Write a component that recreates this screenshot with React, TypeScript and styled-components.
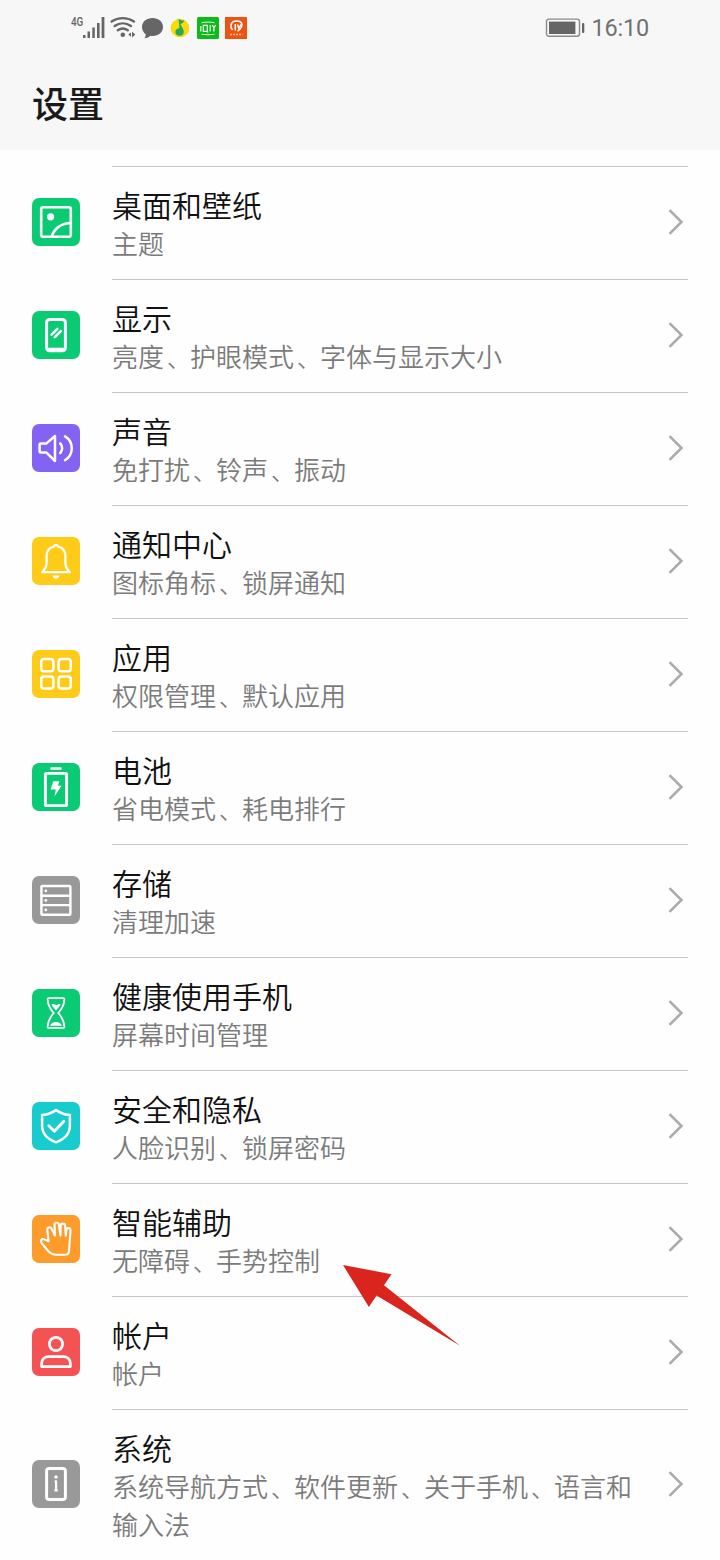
import React from "react";
import styled, { createGlobalStyle } from "styled-components";

const GlobalStyle = createGlobalStyle`
  * { box-sizing: border-box; }
  body {
    margin: 0;
    background: #fff;
    font-family: "Noto Sans CJK SC", "Noto Sans", sans-serif;
  }
`;

const Screen = styled.main`
  position: relative;
  width: 720px;
  height: 1560px;
  overflow: hidden;
  background: #fefefe;
`;

const Header = styled.header`
  height: 150px;
  background: #f7f7f7;
`;

const StatusBar = styled.div`
  display: flex;
  justify-content: space-between;
  align-items: center;
  height: 56px;
  padding: 0 71px;
  color: #666;
`;

const StatusGroup = styled.div<{ $gap?: number }>`
  display: flex;
  align-items: center;
  gap: ${(p) => p.$gap ?? 0}px;
`;

const Network = styled.span`
  width: 12px;
  height: 24px;
  font: 500 13px/12px Roboto, sans-serif;
  transform: scaleX(0.76);
  transform-origin: left;
`;

const Clock = styled.time`
  font: 400 23.5px/28px Roboto, sans-serif;
  letter-spacing: -0.2px;
  color: #707070;
`;

const PageTitle = styled.h1`
  margin: 20px 0 0 32px;
  font-size: 36px;
  line-height: 52px;
  font-weight: 500;
  color: #1a1a1a;
`;

const List = styled.ul`
  margin: 16px 0 0;
  padding: 0;
  list-style: none;
`;

const Row = styled.li`
  display: grid;
  grid-template-columns: 48px 1fr;
  column-gap: 32px;
  align-items: center;
  padding: 0 32px;
`;

const Tile = styled.div<{ $color: string }>`
  width: 48px;
  height: 48px;
  margin-bottom: 1px;
  border-radius: 7px;
  background: ${(p) => p.$color};
  svg { display: block; }
`;

const Body = styled.div`
  display: flex;
  align-items: center;
  justify-content: space-between;
  padding: 17px 3px 17px 0;
  border-top: 1px solid #c6c6c6;
`;

const Texts = styled.div`
  width: 524px;
`;

const Name = styled.div`
  font-size: 30px;
  line-height: 40px;
  font-weight: 350;
  color: #111;
`;

const Detail = styled.div`
  font-size: 26px;
  line-height: 38px;
  font-weight: 350;
  color: #7b7b7b;
`;

const Comma = styled.span`
  margin-left: 3px;
  font-size: 23px;
  line-height: 1;
`;

const ChevronIcon = styled.svg`
  margin-bottom: 2px;
`;

const Pointer = styled.svg`
  position: absolute;
  left: 340px;
  top: 1260px;
`;

const Glyph = ({ children, w = 2.6 }: { children: React.ReactNode; w?: number }) => (
  <svg width="48" height="48" viewBox="0 0 48 48" fill="none" stroke="#fff" strokeWidth={w} strokeLinecap="round" strokeLinejoin="round">
    {children}
  </svg>
);

const Wallpaper = () => (
  <Glyph>
    <rect x="9.2" y="9.2" width="29.6" height="29.6" rx="2" />
    <circle cx="18.6" cy="18.8" r="3.6" fill="#fff" stroke="none" />
    <path d="M20 38C22 31 28.5 25.6 38 25" />
  </Glyph>
);

const Display = () => (
  <Glyph w={3}>
    <rect x="14.6" y="8.4" width="18.8" height="31.4" rx="3" />
    <path d="M15.5 38.3h17" />
    <path d="M19.6 23.6L25.4 17.8M22.8 26.2L28.8 20.2" strokeWidth="2.6" />
  </Glyph>
);

const Sound = () => (
  <Glyph w={2.5}>
    <path d="M23 12L14.2 19.6H8.6a1 1 0 0 0-1 1v6.8a1 1 0 0 0 1 1h5.6L23 37z" />
    <path d="M28.2 19.4a7.2 7.2 0 0 1 0 9.8M33 12.4c9 5.4 9 18.2 0 23.8" />
  </Glyph>
);

const Bell = () => (
  <Glyph w={2.3}>
    <path d="M24 8c1.1 0 1.9.7 2.2 1.700 4.500 1 7.200 4.400 7.200 9.200v7.200c0 3.800 1.300 6 4.400 9.100H10.200c3.100-3.100 4.400-5.300 4.400-9.100v-7.200c0-4.800 2.700-8.200 7.200-9.200.3-1 1.100-1.700 2.200-1.700z" />
    <path d="M20.400 38.500h7.200c-.5 1.900-1.800 3.100-3.600 3.100s-3.100-1.200-3.600-3.100z" fill="#fff" stroke="none" />
  </Glyph>
);

const Apps = () => (
  <Glyph w={2.5}>
    <rect x="9.2" y="9" width="12.2" height="12.2" rx="2.8" />
    <rect x="26.6" y="9" width="12.2" height="12.2" rx="2.8" />
    <rect x="9.2" y="26.4" width="12.2" height="12.2" rx="2.8" />
    <rect x="26.6" y="26.4" width="12.2" height="12.2" rx="2.8" />
  </Glyph>
);

const Battery = () => (
  <Glyph w={2.9}>
    <path d="M19.5 5.5h9" strokeWidth="2.6" />
    <rect x="13.4" y="10.4" width="21.2" height="32.2" rx="1.2" />
    <path d="M21.2 18.2h6.2l-1.5 4.6h3.7L22.4 33.4l1.4-7h-5.2z" fill="#fff" stroke="none" />
  </Glyph>
);

const Storage = () => (
  <Glyph w={2.4}>
    <rect x="9.4" y="10" width="29" height="28.8" rx="1" />
    <path d="M10 19.7h28M10 29.1h28" />
    {[14.9, 24.4, 33.9].map((y) => (
      <circle key={y} cx="13.8" cy={y} r="1.4" fill="#fff" stroke="none" />
    ))}
  </Glyph>
);

const Hourglass = () => (
  <Glyph w={1.8}>
    <path d="M17 9.100h14c1 0 1.500.5 1.400 1.500-.5 6.400-2.600 9.600-6.200 13.400 3.600 3.800 5.700 7 6.200 13.400.1 1-.4 1.500-1.400 1.500H17c-1 0-1.500-.5-1.400-1.500.5-6.400 2.600-9.600 6.200-13.400-3.600-3.800-5.700-7-6.200-13.400-.1-1 .4-1.500 1.400-1.500z" />
    <path d="M19.600 15.600c2.200-1.400 3.500.6 5 .3 1.500-.2 2-1.300 3.900-.7-.8 2.200-2.500 3.900-4.500 6.200-2-2.100-3.700-3.900-4.400-5.800zM18 36.800c.8-2.400 3.200-3.900 6-3.900s5.200 1.500 6 3.900z" fill="#fff" stroke="none" />
  </Glyph>
);

const Shield = () => (
  <Glyph w={2.5}>
    <path d="M24 8.100c4.300 3 9 4.500 13.900 5v10.400c0 8.500-5.500 13.700-13.900 16.800-8.400-3.100-13.900-8.300-13.900-16.800V13.100c4.900-.5 9.600-2 13.900-5z" />
    <path d="M16.800 23.800l5.600 5.400 9.400-10" strokeWidth="2.900" />
  </Glyph>
);

const Hand = () => (
  <Glyph w={2.1}>
    <path d="M16.600 26.200L12.400 24.400c-2.700-1.100-4.700 1.400-2.900 3.600L16.200 36c2.400 2.700 4.700 3.700 8 3.700h8.800c2.400 0 3.800-1.200 4-3.600L38.500 15.600c.2-3-3.700-3.400-4.100-.6L33.800 20.600 33.200 10.900c-.1-3.100-4.500-3.100-4.500 0L28.500 20.500 26.900 9.700c-.4-2.900-4.700-2.500-4.400.6L23 20.600 19.600 13.700c-1.200-2.500-4.900-1.400-4.300 1.400z" />
  </Glyph>
);

const Person = () => (
  <Glyph w={2.8}>
    <circle cx="24" cy="16" r="6.6" />
    <path d="M9.600 38.600v-2.800c0-4.400 3-7.200 7.200-7.200h14.400c4.200 0 7.200 2.800 7.200 7.200v2.800z" />
  </Glyph>
);

const Info = () => (
  <Glyph w={3}>
    <rect x="14.6" y="8.6" width="18.8" height="31" rx="2.6" />
    <circle cx="24" cy="17" r="1.800" fill="#fff" stroke="none" />
    <path d="M22.600 21.400h1.500v8.600M22.400 30.300h3.400" strokeWidth="2.200" strokeLinecap="butt" />
  </Glyph>
);

const Chevron = () => (
  <ChevronIcon width="18" height="30" viewBox="0 0 18 30" fill="none" stroke="#aaa" strokeWidth="2.5">
    <path d="M2.500 3.200l12 11.800-12 11.800" />
  </ChevronIcon>
);

const StatusIcons = () => (
  <svg width="165" height="24" viewBox="83 16 165 24" fill="none">
    <g fill="#666">
      <rect x="83" y="35" width="2.5" height="3" />
      <rect x="87.5" y="31.5" width="2.5" height="6.5" />
      <rect x="92.3" y="27.5" width="2.5" height="10.5" />
      <rect x="97" y="23" width="2.6" height="15" />
      <rect x="101.600" y="17" width="2.8" height="21" />
      <circle cx="122.800" cy="34.800" r="2.3" />
      <path d="M131 32.400v4.400l-2.800-2.200zM132 31.800l3.400 2.800-3.400 2.800z" />
      <path d="M152.500 18c6 0 10.500 3.800 10.500 9s-4.500 9-10.300 9c-.9 0-1.600 0-2.300-.2-1.400 1.400-3.600 2.400-5.900 2.400 1-1.200 1.400-2.600 1.100-4-2.200-1.600-3.600-4.200-3.600-7.200 0-5.200 4.500-9 10.500-9z" />
    </g>
    <g stroke="#666" strokeWidth="2.3" strokeLinecap="round">
      <path d="M111.600 21.500c6.800-4.600 15.600-4.600 22.400 0M114.600 26c5-3.500 11.400-3.500 16.400 0M117.800 30.300c3-2.200 7-2.200 10 0" />
    </g>
    <circle cx="180" cy="28" r="9.3" fill="#fbd90c" />
    <path d="M178.500 18.500c1.800 1.700 3.500 2.200 5.800 2-.5 2-2.200 3.100-4 3.400l3 5.600c1.300 3.600-.3 6.300-3.500 6.300-2.900 0-4.600-1.600-4.400-4 .2-2 1.700-3.400 4.100-3.500z" fill="#22a95b" />
    <rect x="197" y="17" width="22" height="22" rx="1.5" fill="#0bbb17" />
    <path d="M201.500 22.600c4-.8 9-.8 13 0M201.500 34.200c4 .6 9 .6 13 0" stroke="#d8ffd6" strokeWidth="1.100" />
    <path d="M200.800 26v5.500M203.300 25.400h4v6h-4zM206.600 30.800l1.600 1.600M210.200 25v6.500M212.400 25l1.500 3 1.700-3M213.900 28v3.500" stroke="#fff" strokeWidth="1.200" />
    <rect x="225" y="17" width="22" height="22" fill="#ee5411" />
    <path d="M232.500 30c-2.800-3-1.800-8 2-8.800 2.800-.5 5.800-.3 7 1.800 1.400 2.300-.6 6.300-4 8.100" stroke="#fff" strokeWidth="1.600" />
    <path d="M235.300 24v6.500M237.500 24.500l1.400 4 2-4" stroke="#fff" strokeWidth="1.500" />
    <path d="M230 34.600h12.500" stroke="#fbc09f" strokeWidth="1.500" strokeDasharray="2 1" />
  </svg>
);

const PowerIcon = () => (
  <svg width="40" height="20" viewBox="0 0 40 20" fill="none">
    <rect x="1.5" y="1.100" width="33" height="17.2" rx="2.5" stroke="#8b8b8b" strokeWidth="1.4" />
    <rect x="4" y="3.600" width="26.4" height="12.4" fill="#666" />
    <rect x="37" y="5" width="2.3" height="10" rx="1" fill="#666" />
  </svg>
);

const GREEN = "#0acb74";
const YELLOW = "#fecb18";
const GRAY = "#999";

const items = [
  { name: "桌面和壁纸", detail: "主题", color: GREEN, Icon: Wallpaper },
  { name: "显示", detail: "亮度、护眼模式、字体与显示大小", color: GREEN, Icon: Display },
  { name: "声音", detail: "免打扰、铃声、振动", color: "#8263f2", Icon: Sound },
  { name: "通知中心", detail: "图标角标、锁屏通知", color: YELLOW, Icon: Bell },
  { name: "应用", detail: "权限管理、默认应用", color: YELLOW, Icon: Apps },
  { name: "电池", detail: "省电模式、耗电排行", color: GREEN, Icon: Battery },
  { name: "存储", detail: "清理加速", color: GRAY, Icon: Storage },
  { name: "健康使用手机", detail: "屏幕时间管理", color: GREEN, Icon: Hourglass },
  { name: "安全和隐私", detail: "人脸识别、锁屏密码", color: "#18cbcc", Icon: Shield },
  { name: "智能辅助", detail: "无障碍、手势控制", color: "#fd9b2b", Icon: Hand },
  { name: "帐户", detail: "帐户", color: "#f55353", Icon: Person },
  { name: "系统", detail: "系统导航方式、软件更新、关于手机、语言和输入法", color: GRAY, Icon: Info },
];

const withCommas = (text: string) =>
  text.split("、").map((part, i) => (
    <React.Fragment key={i}>
      {i > 0 && <Comma>、</Comma>}
      {part}
    </React.Fragment>
  ));

export default function App() {
  return (
    <Screen>
      <GlobalStyle />
      <Header>
        <StatusBar>
          <StatusGroup>
            <Network>4G</Network>
            <StatusIcons />
          </StatusGroup>
          <StatusGroup $gap={6}>
            <PowerIcon />
            <Clock>16:10</Clock>
          </StatusGroup>
        </StatusBar>
        <PageTitle>设置</PageTitle>
      </Header>
      <List>
        {items.map(({ name, detail, color, Icon }) => (
          <Row key={name}>
            <Tile $color={color}>
              <Icon />
            </Tile>
            <Body>
              <Texts>
                <Name>{name}</Name>
                <Detail>{withCommas(detail)}</Detail>
              </Texts>
              <Chevron />
            </Body>
          </Row>
        ))}
      </List>
      <Pointer width="124" height="90" viewBox="340 1260 124 90">
        <path d="M343 1265l48.500 9.200-7.500 11.100 76 60.400-83.400-50.200-7.700 11.500z" fill="#d9251d" />
      </Pointer>
    </Screen>
  );
}
